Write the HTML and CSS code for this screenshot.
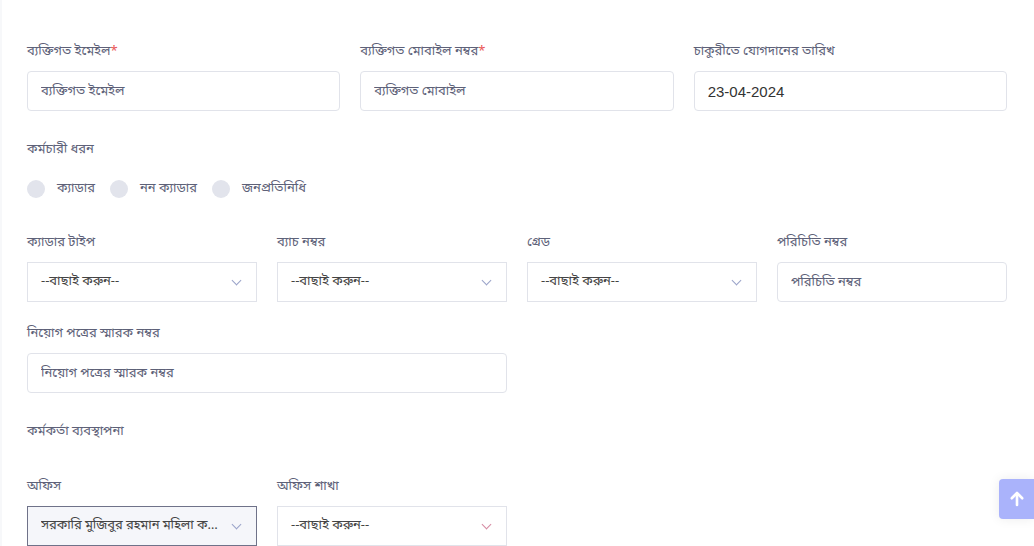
FILE: index.html
```html
<!DOCTYPE html>
<html lang="bn">
<head>
    <meta charset="UTF-8">
    <meta name="viewport" content="width=device-width, initial-scale=1.0">
    <title>কর্মচারী তথ্য</title>
    <link rel="stylesheet" href="styles.css">
</head>
<body>
    <div class="form-card">
        <div class="row cols-3">
            <div class="field">
                <label>ব্যক্তিগত ইমেইল<span class="req">*</span></label>
                <input type="text" class="input" placeholder="ব্যক্তিগত ইমেইল">
            </div>
            <div class="field">
                <label>ব্যক্তিগত মোবাইল নম্বর<span class="req">*</span></label>
                <input type="text" class="input" placeholder="ব্যক্তিগত মোবাইল">
            </div>
            <div class="field">
                <label>চাকুরীতে যোগদানের তারিখ</label>
                <input type="text" class="input date" value="23-04-2024">
            </div>
        </div>

        <div class="section-title type-title">কর্মচারী ধরন</div>
        <div class="radio-group">
            <label class="radio"><span class="dot"></span>ক্যাডার</label>
            <label class="radio"><span class="dot"></span>নন ক্যাডার</label>
            <label class="radio"><span class="dot"></span>জনপ্রতিনিধি</label>
        </div>

        <div class="row cols-4">
            <div class="field">
                <label>ক্যাডার টাইপ</label>
                <div class="select">--বাছাই করুন--<span class="chev"></span></div>
            </div>
            <div class="field">
                <label>ব্যাচ নম্বর</label>
                <div class="select">--বাছাই করুন--<span class="chev"></span></div>
            </div>
            <div class="field">
                <label>গ্রেড</label>
                <div class="select">--বাছাই করুন--<span class="chev"></span></div>
            </div>
            <div class="field">
                <label>পরিচিতি নম্বর</label>
                <input type="text" class="input" placeholder="পরিচিতি নম্বর">
            </div>
        </div>

        <div class="row cols-2 memo-row">
            <div class="field">
                <label>নিয়োগ পত্রের স্মারক নম্বর</label>
                <input type="text" class="input" placeholder="নিয়োগ পত্রের স্মারক নম্বর">
            </div>
        </div>

        <div class="section-title manage-title">কর্মকর্তা ব্যবস্থাপনা</div>

        <div class="row cols-4 office-row">
            <div class="field">
                <label>অফিস</label>
                <div class="select active"><span class="ellipsis">সরকারি মুজিবুর রহমান মহিলা কলেজ</span><span class="chev"></span></div>
            </div>
            <div class="field">
                <label>অফিস শাখা</label>
                <div class="select">--বাছাই করুন--<span class="chev pink"></span></div>
            </div>
        </div>
    </div>

    <a href="#" class="to-top">
        <svg width="18" height="18" viewBox="0 0 24 24" fill="none" stroke="#fff" stroke-width="3.5" stroke-linecap="round" stroke-linejoin="round"><path d="M12 20V5"/><path d="M5 11l7-7 7 7"/></svg>
    </a>
</body>
</html>
```

FILE: styles.css
```css
body {
    margin: 0;
    background-color: #f7f8fa;
    font-family: "Noto Sans Bengali", "Noto Sans", "Liberation Sans", sans-serif;
    color: #5d6178;
    font-size: 13px;
}

.form-card {
    background-color: #fff;
    margin-left: 2px;
    padding: 42px 27px 0 25px;
    min-height: 546px;
    box-sizing: border-box;
}

.row {
    display: grid;
    gap: 20px;
}

.cols-3 { grid-template-columns: repeat(3, minmax(0, 1fr)); }
.cols-4 { grid-template-columns: repeat(4, minmax(0, 1fr)); }
.cols-2 { grid-template-columns: repeat(2, minmax(0, 1fr)); }

.field label {
    display: block;
    height: 20px;
    line-height: 20px;
    margin-bottom: 9px;
}

.req {
    color: #ea5455;
}

.input {
    display: block;
    width: 100%;
    height: 40px;
    box-sizing: border-box;
    padding: 0 13px;
    border: 1px solid #e1e3ea;
    border-radius: 4px;
    font-family: inherit;
    font-size: 13px;
    color: #5d6178;
    outline: none;
}

.input::placeholder {
    color: #5d6178;
}

.input.date {
    font-family: "Liberation Sans", Arial, sans-serif;
    font-size: 15px;
    color: #333;
}

.select {
    position: relative;
    height: 40px;
    box-sizing: border-box;
    border: 1px solid #e1e3ea;
    padding: 0 40px 0 13px;
    line-height: 38px;
    color: #444;
    white-space: nowrap;
}

.select.active {
    border-color: #6f7289;
    background-color: #f5f6fa;
    padding-right: 34px;
}

.ellipsis {
    display: block;
    overflow: hidden;
    text-overflow: ellipsis;
    letter-spacing: -0.1px;
}

.chev {
    position: absolute;
    right: 16px;
    top: 14px;
    width: 6px;
    height: 6px;
    border-right: 1px solid #9aa3c9;
    border-bottom: 1px solid #9aa3c9;
    transform: rotate(45deg);
}

.chev.pink {
    border-color: #d58aa2;
}

.section-title {
    line-height: 20px;
}

.type-title {
    margin-top: 29px;
}

.radio-group {
    display: flex;
    margin-top: 20px;
    gap: 15px;
}

.radio {
    display: flex;
    align-items: center;
    gap: 12px;
    line-height: 18px;
}

.dot {
    width: 18px;
    height: 18px;
    border-radius: 50%;
    background-color: #e2e4ec;
}

.cols-4 {
    margin-top: 35px;
}

.memo-row {
    margin-top: 22px;
}

.manage-title {
    margin-top: 29px;
}

.office-row {
    margin-top: 35px;
}

.to-top {
    position: fixed;
    right: 0;
    top: 479px;
    width: 35px;
    height: 40px;
    background-color: #aab3fb;
    border-radius: 4px 0 0 4px;
    display: flex;
    align-items: center;
    justify-content: center;
    box-shadow: 0 0 12px rgba(0, 0, 0, 0.08);
}
```
